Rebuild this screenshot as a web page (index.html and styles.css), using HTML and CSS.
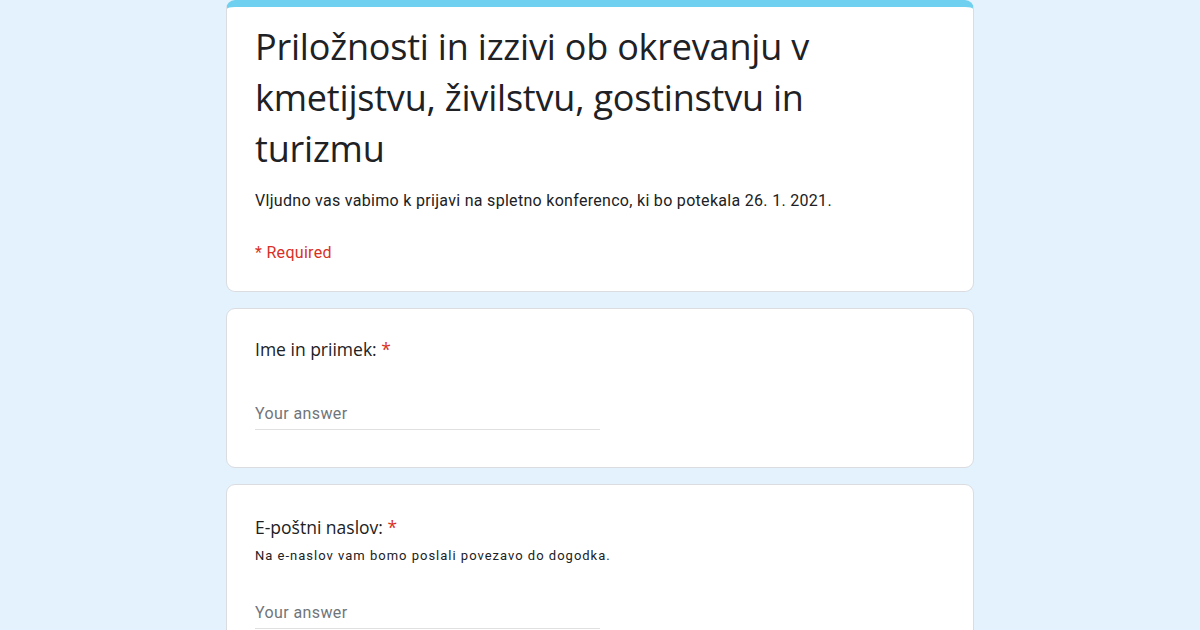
FILE: index.html
```html
<!DOCTYPE html>
<html lang="sl">
<head>
<meta charset="utf-8">
<title>Priložnosti in izzivi ob okrevanju</title>
<link rel="stylesheet" href="styles.css">
</head>
<body>
<main class="form">
  <section class="card header-card">
    <h1 class="title">Priložnosti in izzivi ob okrevanju v kmetijstvu, živilstvu, gostinstvu in turizmu</h1>
    <p class="desc">Vljudno vas vabimo k prijavi na spletno konferenco, ki bo potekala 26. 1. 2021.</p>
    <p class="required">* Required</p>
  </section>
  <section class="card question">
    <div class="q-title">Ime in priimek: <span class="star">*</span></div>
    <div class="answer">Your answer</div>
  </section>
  <section class="card question">
    <div class="q-title">E-poštni naslov: <span class="star">*</span></div>
    <div class="q-help">Na e-naslov vam bomo poslali povezavo do dogodka.</div>
    <div class="answer answer-email">Your answer</div>
  </section>
</main>
</body>
</html>
```
FILE: styles.css
```css
html, body {
  margin: 0;
  padding: 0;
  background: #e3f2fd;
  height: 630px;
  overflow: hidden;
}
.form {
  width: 748px;
  margin: 0 auto;
  display: flex;
  flex-direction: column;
  gap: 16px;
}
.card {
  background: #fff;
  border: 1px solid #dadce0;
  border-radius: 9px;
  padding: 0 28px;
  box-sizing: border-box;
}
.header-card {
  border-top: 7px solid #6fd1ef;
  height: 292px;
  padding-top: 14px;
}
.title {
  margin: 0;
  max-width: 600px;
  font-family: "Open Sans", sans-serif;
  font-weight: 400;
  font-size: 36px;
  line-height: 51px;
  color: #202124;
  letter-spacing: -0.2px;
}
.desc {
  margin: 16px 0 0;
  font-family: Roboto, "Liberation Sans", sans-serif;
  font-size: 16px;
  line-height: 22px;
  letter-spacing: 0.3px;
  color: #202124;
}
.required {
  margin: 30px 0 0;
  font-family: Roboto, "Liberation Sans", sans-serif;
  font-size: 16px;
  line-height: 22px;
  letter-spacing: 0.3px;
  color: #d93025;
}
.question {
  height: 160px;
  padding-top: 27px;
}
.question:last-child {
  height: 200px;
  padding-top: 29px;
}
.q-title {
  font-family: "Open Sans", sans-serif;
  font-size: 17.5px;
  line-height: 26px;
  color: #202124;
}
.star {
  color: #d93025;
}
.q-help {
  margin-top: 7px;
  font-family: Roboto, "Liberation Sans", sans-serif;
  font-size: 13px;
  line-height: 18px;
  letter-spacing: 1px;
  color: #202124;
}
.answer {
  margin-top: 41px;
  width: 345px;
  padding-bottom: 4px;
  border-bottom: 1px solid #e0e0e0;
  font-family: Roboto, "Liberation Sans", sans-serif;
  font-size: 16px;
  line-height: 22px;
  letter-spacing: 0.4px;
  color: #70757a;
}
.answer-email {
  margin-top: 37px;
}
```
